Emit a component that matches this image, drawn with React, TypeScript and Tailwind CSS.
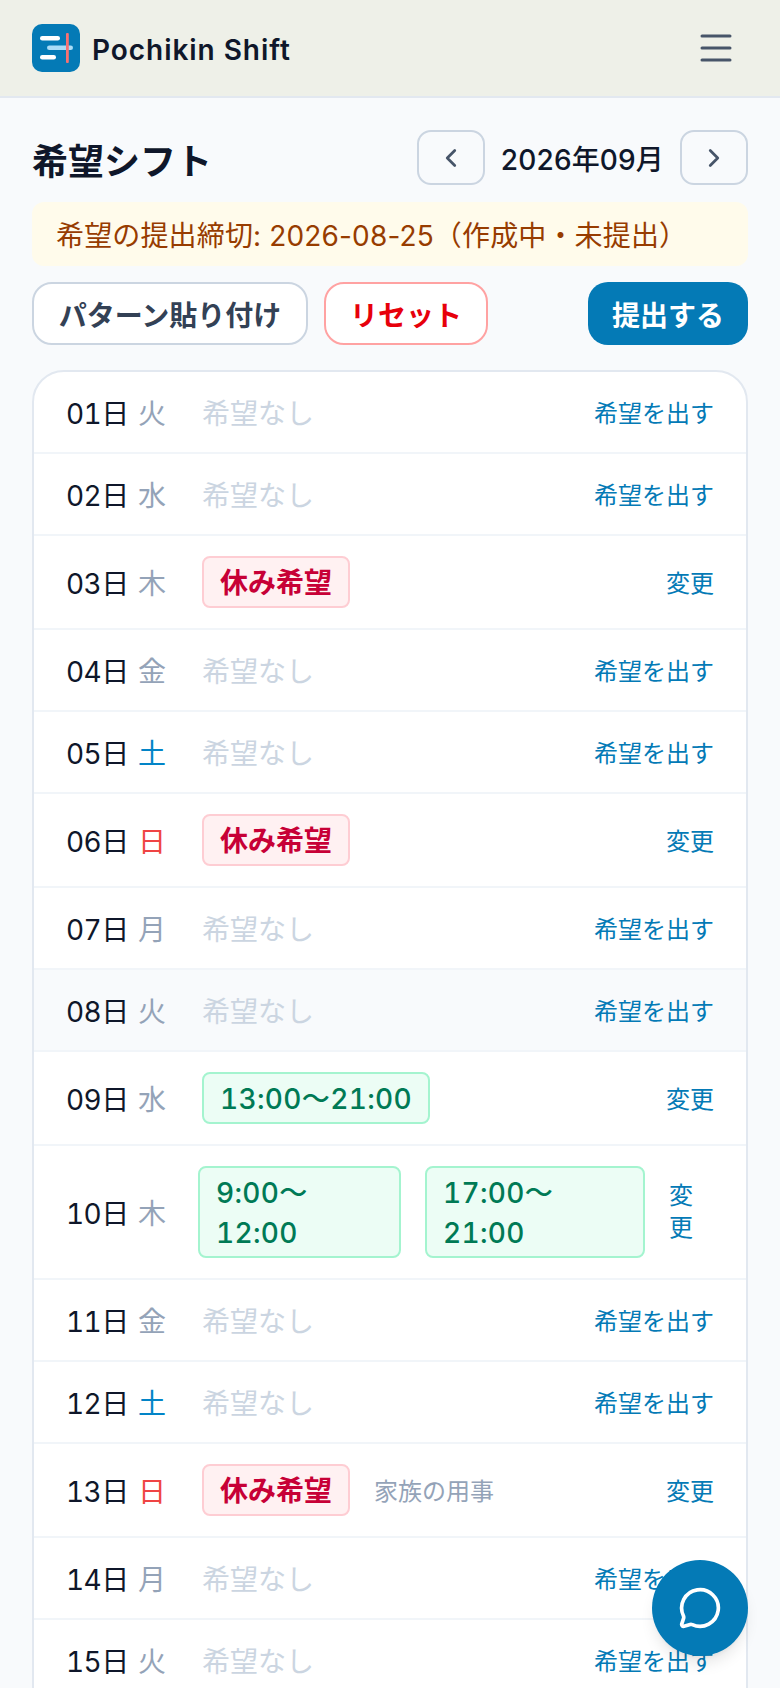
import React from 'react';
import { ChevronLeft, ChevronRight, MessageCircle } from 'lucide-react';

type Day = {
  d: string;
  w: string;
  kind?: 'off' | 'time';
  time?: string;
  note?: string;
  hover?: boolean;
};

const days: Day[] = [
  { d: '01', w: '火' },
  { d: '02', w: '水' },
  { d: '03', w: '木', kind: 'off' },
  { d: '04', w: '金' },
  { d: '05', w: '土' },
  { d: '06', w: '日', kind: 'off' },
  { d: '07', w: '月' },
  { d: '08', w: '火', hover: true },
  { d: '09', w: '水', kind: 'time', time: '13:00〜21:00' },
];

const daysAfter: Day[] = [
  { d: '11', w: '金' },
  { d: '12', w: '土' },
  { d: '13', w: '日', kind: 'off', note: '家族の用事' },
  { d: '14', w: '月' },
  { d: '15', w: '火' },
];

const weekdayColor = (w: string) => {
  if (w === '土') return 'text-[#0284c7]';
  if (w === '日') return 'text-[#ef4444]';
  return 'text-[#94a3b8]';
};

const DateLabel = ({ d, w, width }: { d: string; w: string; width: string }) => (
  <div className={`flex shrink-0 items-center gap-[8px] pt-[4px] text-[28px] ${width}`}>
    <span className="w-[64px] whitespace-nowrap tracking-[-0.6px] tabular-nums text-[#0f172a]">{d}日</span>
    <span className={weekdayColor(w)}>{w}</span>
  </div>
);

const Row = ({ day }: { day: Day }) => (
  <div
    className={`flex items-center border-b-2 border-[#f1f5f9] pl-[32px] pr-[32px] ${
      day.kind ? 'h-[94px]' : 'h-[82px]'
    } ${day.hover ? 'bg-[#f8fafc]' : ''}`}
  >
    <DateLabel d={day.d} w={day.w} width="w-[136px]" />
    <div className="flex min-w-0 flex-1 items-center gap-[24px]">
      {day.kind === 'off' && (
        <span className="rounded-[8px] border-2 border-[#fecdd3] bg-[#fff1f2] px-[16px] pb-[3px] pt-[5px] text-[28px] font-bold leading-[40px] text-[#c70036]">
          休み希望
        </span>
      )}
      {day.kind === 'time' && (
        <span className="rounded-[8px] border-2 border-[#a4f4cf] bg-[#ecfdf5] px-[16px] pb-[3px] pt-[5px] text-[28px] font-medium leading-[40px] tracking-[0.35px] tabular-nums text-[#007a55]">
          {day.time}
        </span>
      )}
      {day.note && <span className="pt-[4px] text-[24px] text-[#94a3b8]">{day.note}</span>}
      {!day.kind && <span className="pt-[4px] text-[28px] text-[#cbd5e1]">希望なし</span>}
    </div>
    <a className="shrink-0 pt-[4px] text-[24px] text-[#047ab6]">{day.kind ? '変更' : '希望を出す'}</a>
  </div>
);

export default function App() {
  return (
    <div
      className="relative h-[1688px] overflow-hidden bg-[#f8fafc]"
      style={{ fontFamily: 'Inter, "Noto Sans CJK JP", sans-serif' }}
    >
      <header className="flex h-[98px] items-center justify-between border-b-2 border-[#e2e8f0] bg-[#eef0e8] pl-[32px] pr-[48px]">
        <div className="flex items-center gap-[12px]">
          <svg width="48" height="48" viewBox="0 0 48 48">
            <rect width="48" height="48" rx="10" fill="#047ab6" />
            <rect x="8" y="12" width="20" height="4.5" rx="2.25" fill="#fff" />
            <rect x="15" y="21.5" width="26" height="4.5" rx="2.25" fill="#a9dcf7" />
            <rect x="8" y="31" width="16" height="4.5" rx="2.25" fill="#fff" />
            <rect x="34" y="9" width="2.8" height="30" rx="1" fill="#f87171" />
          </svg>
          <span className="pt-[4px] text-[28px] font-semibold tracking-[0.95px] text-[#0f172a]">Pochikin Shift</span>
        </div>
        <svg width="32" height="30" viewBox="0 0 32 30" fill="none" stroke="#475569" strokeWidth="3" strokeLinecap="round">
          <path d="M2 3h28M2 15h28M2 27h28" />
        </svg>
      </header>

      <main className="px-[32px] pt-[32px]">
        <div className="flex h-[55px] items-center justify-between">
          <h1 className="pt-[8px] text-[36px] font-bold text-[#0f172a]">希望シフト</h1>
          <div className="flex items-center gap-[16px]">
            <button className="flex h-[55px] w-[68px] items-center justify-center rounded-[14px] border-2 border-[#cbd5e1] text-[#475569]">
              <ChevronLeft size={30} strokeWidth={2.2} />
            </button>
            <span className="pt-[5px] text-[28px] font-medium tracking-[0.15px] text-[#0f172a]">2026年09月</span>
            <button className="flex h-[55px] w-[68px] items-center justify-center rounded-[14px] border-2 border-[#cbd5e1] text-[#475569]">
              <ChevronRight size={30} strokeWidth={2.2} />
            </button>
          </div>
        </div>

        <div className="mt-[17px] flex h-[64px] items-center rounded-[12px] bg-[#fffbeb] px-[24px] pt-[3px] text-[28px] tracking-[0.15px] text-[#973c00]">
          希望の提出締切: 2026-08-25（作成中・未提出）
        </div>

        <div className="mt-[16px] flex h-[63px] items-stretch gap-[16px]">
          <button className="w-[276px] rounded-[20px] border-2 border-[#cbd5e1] bg-white pt-[4px] text-[28px] font-bold text-[#334155]">
            パターン貼り付け
          </button>
          <button className="w-[164px] rounded-[20px] border-2 border-[#ffa2a2] bg-white pt-[4px] text-[28px] font-bold text-[#e7000b]">
            リセット
          </button>
          <button className="ml-auto w-[160px] rounded-[20px] bg-[#047ab6] pt-[4px] text-[28px] font-bold text-white">
            提出する
          </button>
        </div>

        <div className="mt-[25px] overflow-hidden rounded-[32px] border-2 border-[#e2e8f0] bg-white pb-[40px]">
          {days.map((day) => (
            <Row key={day.d} day={day} />
          ))}
          <div className="flex h-[134px] items-center border-b-2 border-[#f1f5f9] pl-[32px] pr-[32px]">
            <DateLabel d="10" w="木" width="w-[132px]" />
            <div className="flex flex-1 gap-[24px]">
              <span className="w-[203px] rounded-[8px] border-2 border-[#a4f4cf] bg-[#ecfdf5] px-[16px] pb-[3px] pt-[5px] text-[28px] font-medium leading-[40px] tracking-[0.35px] tabular-nums text-[#007a55]">
                9:00〜<br />12:00
              </span>
              <span className="w-[220px] rounded-[8px] border-2 border-[#a4f4cf] bg-[#ecfdf5] px-[16px] pb-[3px] pt-[5px] text-[28px] font-medium leading-[40px] tracking-[0.35px] tabular-nums text-[#007a55]">
                17:00〜<br />21:00
              </span>
            </div>
            <a className="w-[45px] shrink-0 text-[24px] leading-[32px] text-[#047ab6]">変更</a>
          </div>
          {daysAfter.map((day) => (
            <Row key={day.d} day={day} />
          ))}
        </div>
      </main>

      <button className="fixed left-[652px] top-[1560px] flex h-[96px] w-[96px] items-center justify-center rounded-full bg-[#047ab6] text-white shadow-lg">
        <MessageCircle size={44} strokeWidth={2} />
      </button>
    </div>
  );
}
